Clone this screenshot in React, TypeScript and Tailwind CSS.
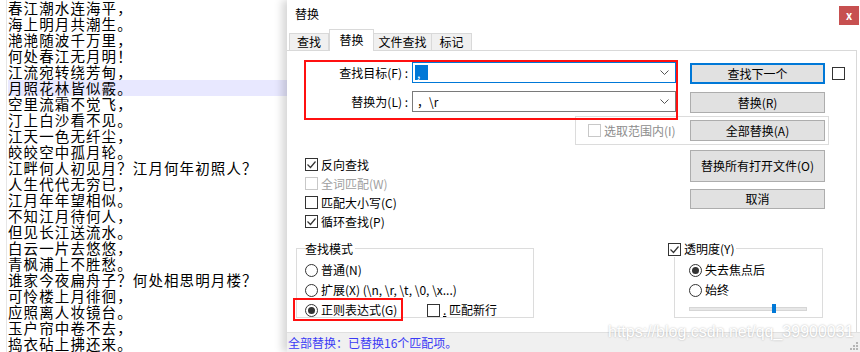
import React from 'react';

const poem = [
  '春江潮水连海平，',
  '海上明月共潮生。',
  '滟滟随波千万里，',
  '何处春江无月明！',
  '江流宛转绕芳甸，',
  '月照花林皆似霰。',
  '空里流霜不觉飞，',
  '汀上白沙看不见。',
  '江天一色无纤尘，',
  '皎皎空中孤月轮。',
  '江畔何人初见月？江月何年初照人？',
  '人生代代无穷已，',
  '江月年年望相似。',
  '不知江月待何人，',
  '但见长江送流水。',
  '白云一片去悠悠，',
  '青枫浦上不胜愁。',
  '谁家今夜扁舟子？何处相思明月楼？',
  '可怜楼上月徘徊，',
  '应照离人妆镜台。',
  '玉户帘中卷不去，',
  '捣衣砧上拂还来。',
];

function CheckBox({ checked = false, disabled = false }: { checked?: boolean; disabled?: boolean }) {
  return (
    <span
      className={`flex h-[13px] w-[13px] shrink-0 items-center justify-center border bg-white ${
        disabled ? 'border-[#c8c8c8]' : 'border-[#333333]'
      }`}
    >
      {checked && (
        <svg width="11" height="11" viewBox="0 0 11 11">
          <polyline points="1.5,5.5 4.5,8.5 9.5,2.5" fill="none" stroke="#333333" strokeWidth="1.2" />
        </svg>
      )}
    </span>
  );
}

function Radio({ checked = false }: { checked?: boolean }) {
  return (
    <span className="flex h-[13px] w-[13px] shrink-0 items-center justify-center rounded-full border border-[#333333] bg-white">
      {checked && <span className="h-[7px] w-[7px] rounded-full bg-[#333333]" />}
    </span>
  );
}

function Btn({ children, className = '' }: { children: React.ReactNode; className?: string }) {
  return (
    <div
      className={`flex w-[135px] items-center justify-center bg-[#e1e1e1] text-[12px] leading-4 text-black ${className}`}
    >
      {children}
    </div>
  );
}

function Chevron() {
  return (
    <svg width="9" height="6" viewBox="0 0 9 6" className="absolute right-[6px] top-1/2 -translate-y-1/2">
      <polyline points="0.5,0.5 4.5,4.5 8.5,0.5" fill="none" stroke="#555555" strokeWidth="1" />
    </svg>
  );
}

export default function App() {
  return (
    <div className="flex h-[352px] w-[860px] overflow-hidden bg-white font-['Noto_Sans_CJK_SC',sans-serif] text-black">
      {/* editor */}
      <div className="h-[352px] w-[287px] shrink-0 pl-[6px]">
        <div className="h-full border-l border-[#e6e6e6] pl-px">
          {poem.map((line, i) => (
            <div
              key={i}
              className={`h-4 whitespace-nowrap text-[14.5px] leading-4 tracking-[1.1px] ${i === 5 ? 'bg-[#e8e8ff]' : ''}`}
            >
              {line}
            </div>
          ))}
        </div>
      </div>

      {/* dialog */}
      <div className="relative flex h-[352px] w-[573px] flex-col bg-white text-[12px] leading-4 shadow-[-5px_0_8px_rgba(0,0,0,0.16)]">
        <div className="flex h-[29px] items-start justify-between">
          <span className="pl-2 pt-[6px]">替换</span>
          <div className="mr-px mt-[6px] flex h-[19px] w-[20px] items-center justify-center bg-[#c75050] text-[11px] font-bold leading-none text-white">
            x
          </div>
        </div>

        {/* tabs */}
        <div className="flex h-[21px] items-end pl-[2px]">
          <div className="flex h-[17px] w-[40px] items-center justify-center border border-b-0 border-[#d9d9d9] bg-[#f0f0f0]">查找</div>
          <div className="relative z-10 -mb-px flex h-[22px] w-[45px] items-center justify-center border border-b-0 border-[#d9d9d9] bg-white pb-px">替换</div>
          <div className="flex h-[17px] w-[58px] items-center justify-center border border-b-0 border-l-0 border-[#d9d9d9] bg-[#f0f0f0]">文件查找</div>
          <div className="flex h-[17px] w-[40px] items-center justify-center border border-b-0 border-l-0 border-[#d9d9d9] bg-[#f0f0f0]">标记</div>
        </div>

        {/* pane */}
        <div className="relative h-[282px] w-[570px] border-r border-t border-[#d9d9d9]">
          {/* find / replace fields */}
          <div className="mt-[11px] flex items-start">
            <div className="flex flex-col gap-[8px]">
              <div className="flex h-[21px] items-center">
                <span className="w-[121px] text-right">查找目标(F) :</span>
                <div className="relative ml-[4px] flex h-[21px] w-[264px] items-center border border-[#0078d7] bg-white pl-[2px]">
                  <span className="flex h-[15px] w-[13px] items-center bg-[#0078d7] pl-[2px] text-white">,</span>
                  <Chevron />
                </div>
              </div>
              <div className="flex h-[21px] items-center">
                <span className="w-[121px] text-right">替换为(L) :</span>
                <div className="relative ml-[4px] flex h-[21px] w-[264px] items-center border border-[#7a7a7a] bg-white pl-[4px]">
                  <span>，\r</span>
                  <Chevron />
                </div>
              </div>
            </div>
            <div className="ml-[14px] mt-px flex flex-col gap-[8px]">
              <Btn className="h-[21px] border-2 border-[#0078d7]">查找下一个</Btn>
              <Btn className="h-[21px] border border-[#adadad]">替换(R)</Btn>
            </div>
            <div className="ml-[7px] mt-[5px]">
              <CheckBox />
            </div>
          </div>

          {/* in selection */}
          <div className="ml-[288px] mt-[3px] flex h-[29px] w-[254px] items-center justify-between border border-[#dcdcdc] pl-[12px] pr-[3px]">
            <div className="flex items-center gap-[3px] text-[#8d8d8d]">
              <CheckBox disabled />
              <span>选取范围内(I)</span>
            </div>
            <Btn className="h-[21px] border border-[#adadad]">全部替换(A)</Btn>
          </div>

          {/* options */}
          <div className="mt-[5px] flex">
            <div className="ml-[18px] flex w-[385px] flex-col pt-[5px]">
              <div className="flex h-[19px] items-center gap-[3px]">
                <CheckBox checked />
                <span>反向查找</span>
              </div>
              <div className="flex h-[19px] items-center gap-[3px] text-[#a0a0a0]">
                <CheckBox disabled />
                <span>全词匹配(W)</span>
              </div>
              <div className="flex h-[19px] items-center gap-[3px]">
                <CheckBox />
                <span>匹配大小写(C)</span>
              </div>
              <div className="flex h-[19px] items-center gap-[3px]">
                <CheckBox checked />
                <span>循环查找(P)</span>
              </div>
            </div>
            <div className="flex flex-col">
              <Btn className="h-[32px] border border-[#adadad]">替换所有打开文件(O)</Btn>
              <Btn className="mt-[7px] h-[20px] border border-[#adadad]">取消</Btn>
            </div>
          </div>

          {/* groups */}
          <div className="mt-[17px] flex">
            <div className="relative ml-[9px] h-[70px] w-[238px] border border-[#dcdcdc] pl-[8px] pt-[11px]">
              <span className="absolute left-[8px] top-[-8px] bg-white pr-[2px]">查找模式</span>
              <div className="flex h-[20px] items-center gap-[3px]">
                <Radio />
                <span>普通(N)</span>
              </div>
              <div className="flex h-[20px] items-center gap-[3px]">
                <Radio />
                <span>扩展(X) (\n, \r, \t, \0, \x...)</span>
              </div>
              <div className="flex h-[20px] items-center">
                <div className="flex w-[122px] items-center gap-[3px]">
                  <Radio checked />
                  <span>正则表达式(G)</span>
                </div>
                <div className="flex items-center gap-[3px]">
                  <CheckBox />
                  <span>
                    <span className="underline">.</span> 匹配新行
                  </span>
                </div>
              </div>
            </div>

            <div className="relative ml-[140px] h-[70px] w-[149px] border border-[#dcdcdc] pl-[14px] pt-[11px]">
              <div className="absolute left-[-7px] top-[-8px] flex items-center gap-[3px] bg-white pr-[2px]">
                <CheckBox checked />
                <span>透明度(Y)</span>
              </div>
              <div className="flex h-[20px] items-center gap-[3px]">
                <Radio checked />
                <span>失去焦点后</span>
              </div>
              <div className="flex h-[20px] items-center gap-[3px]">
                <Radio />
                <span>始终</span>
              </div>
              <div className="relative mt-[7px] h-[4px] w-[118px] border border-[#d6d6d6] bg-[#e7e7e7]">
                <span className="absolute left-[82px] top-[-4px] h-[9px] w-[4px] bg-[#0078d7]" />
              </div>
            </div>
          </div>

          {/* red annotation boxes */}
          <div className="absolute left-[17px] top-[9px] h-[60px] w-[374px] border-2 border-[#ff1010]" />
          <div className="absolute left-[6px] top-[247px] h-[23px] w-[110px] border-2 border-[#ff1010]" />
        </div>

        {/* status bar */}
        <div className="relative h-[20px] border-t border-[#e0e0e0] bg-[#f0f0f0] pl-px leading-[19px] text-[#3b3bf5]">
          全部替换：已替换16个匹配项。
          <svg width="8" height="8" viewBox="0 0 8 8" className="absolute bottom-[2px] right-[2px]">
            <rect x="6" y="0" width="2" height="2" fill="#b5b5b5" />
            <rect x="3" y="3" width="2" height="2" fill="#b5b5b5" />
            <rect x="6" y="3" width="2" height="2" fill="#b5b5b5" />
            <rect x="0" y="6" width="2" height="2" fill="#b5b5b5" />
            <rect x="3" y="6" width="2" height="2" fill="#b5b5b5" />
            <rect x="6" y="6" width="2" height="2" fill="#b5b5b5" />
          </svg>
        </div>

        {/* watermark */}
        <span className="pointer-events-none absolute left-[321px] top-[323px] whitespace-nowrap font-['Liberation_Sans',sans-serif] text-[16px] leading-[18px] text-white [text-shadow:0_0_2px_rgba(0,0,0,0.3)]">
          https://blog.csdn.net/qq_39900031
        </span>
      </div>
    </div>
  );
}
